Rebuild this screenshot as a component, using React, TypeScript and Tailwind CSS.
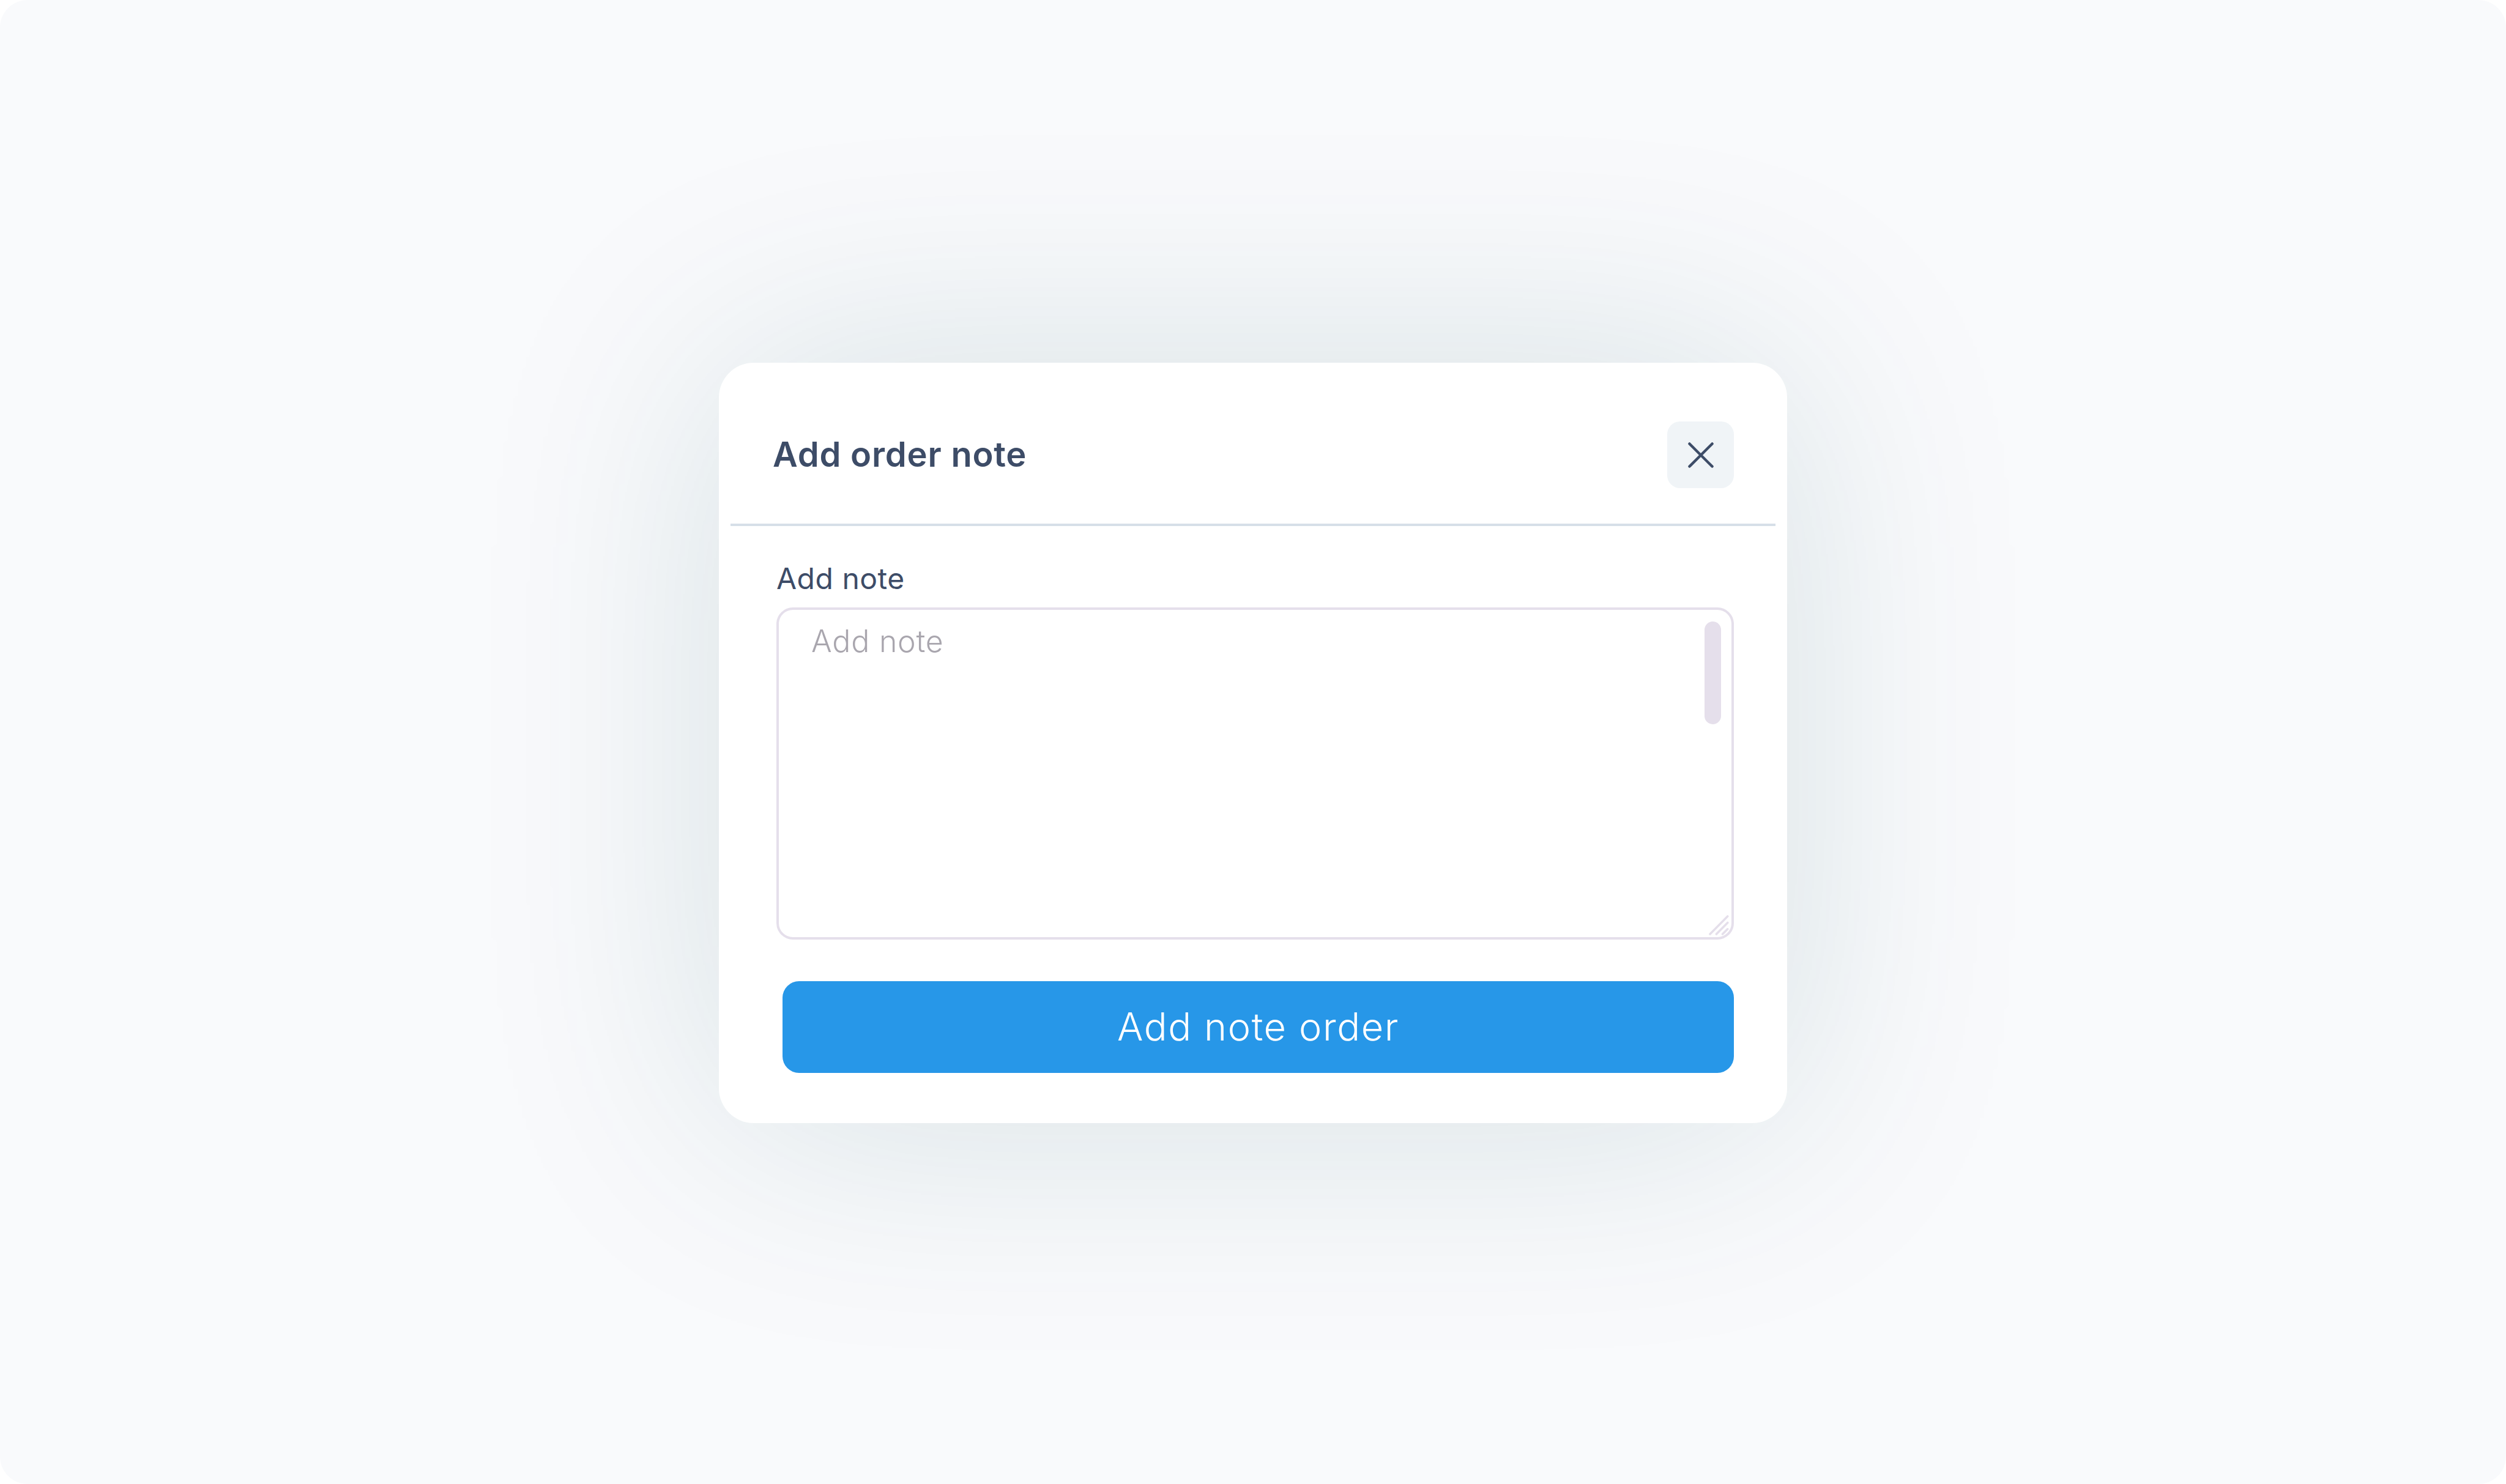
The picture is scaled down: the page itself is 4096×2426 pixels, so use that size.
const CLOSE_SIZE = 42;

function CloseIcon() {
  return (
    <svg width={CLOSE_SIZE} height={CLOSE_SIZE} viewBox="0 0 42 42" fill="none" aria-hidden="true">
      <path
        d="M2.45 2.45l37.1 37.1M39.55 2.45l-37.1 37.1"
        stroke="currentColor"
        strokeWidth="4.4"
        strokeLinecap="round"
      />
    </svg>
  );
}

function ResizeHandle() {
  return (
    <svg
      width="33"
      height="33"
      viewBox="0 0 33 33"
      fill="none"
      className="pointer-events-none absolute bottom-[7px] right-[8px]"
      aria-hidden="true"
    >
      <path
        d="M2 31L30.7 2M12.4 31l18.3-18.6M22.5 31l8.2-8.2"
        stroke="currentColor"
        strokeWidth="3.6"
        strokeLinecap="round"
      />
    </svg>
  );
}

export default function App() {
  return (
    <div className="h-[2426px] w-[4096px] overflow-hidden bg-white font-['Inter','Liberation_Sans',sans-serif]">
      <main className="flex h-full w-full justify-center rounded-[45px] bg-[#f9fafc] pt-[593px]">
        <div className="relative h-[1243px] w-[1746px]">
          {/* soft glow, wider than a box-shadow can spread */}
          <div
            className="absolute inset-0 rounded-[57px] bg-[#0a4650] opacity-[0.14] blur-[205px]"
            aria-hidden="true"
          />
          <section className="relative flex h-full w-full flex-col rounded-[57px] bg-white px-[19px]">
            {/* header */}
            <header className="flex h-[267px] items-start justify-between border-b-4 border-[#d6dfe8] pl-[69px] pr-[68px] pt-[96px] text-[#3d4c67]">
              <h1 className="mt-[18px] whitespace-nowrap text-[56px] font-semibold leading-[72px] tracking-[0.8px]">
                Add order note
              </h1>
              <button
                type="button"
                aria-label="Close"
                className="flex size-[109px] items-center justify-center rounded-[21px] bg-[#f0f4f7]"
              >
                <CloseIcon />
              </button>
            </header>

            {/* note field */}
            <div className="flex flex-col pl-[75px] pr-[68px] pt-[56px]">
              <label
                htmlFor="note"
                className="h-[77px] whitespace-nowrap text-[48px] font-normal leading-[60px] tracking-[0.5px] text-[#3d4c67]"
              >
                Add note
              </label>
              <div className="relative h-[543px] text-[#e5dfeb]">
                <textarea
                  id="note"
                  placeholder="Add note"
                  className="block h-full w-full resize-none overflow-hidden rounded-[27px] border-4 border-[#e5dfeb] bg-white px-[53px] py-[21px] text-[50px] font-light leading-[60px] tracking-[0.8px] outline-none placeholder:text-[#a9a6ae]"
                />
                <span className="absolute right-[21px] top-[23px] h-[168px] w-[27px] rounded-full bg-[#e5dfeb]" />
                <ResizeHandle />
              </div>
              <button
                type="button"
                className="ml-[10px] mt-[68px] h-[150px] whitespace-nowrap rounded-[27px] bg-[#2797e8] pb-[3px] text-[63px] font-light leading-[72px] tracking-[1.6px] text-white"
              >
                Add note order
              </button>
            </div>
          </section>
        </div>
      </main>
    </div>
  );
}
